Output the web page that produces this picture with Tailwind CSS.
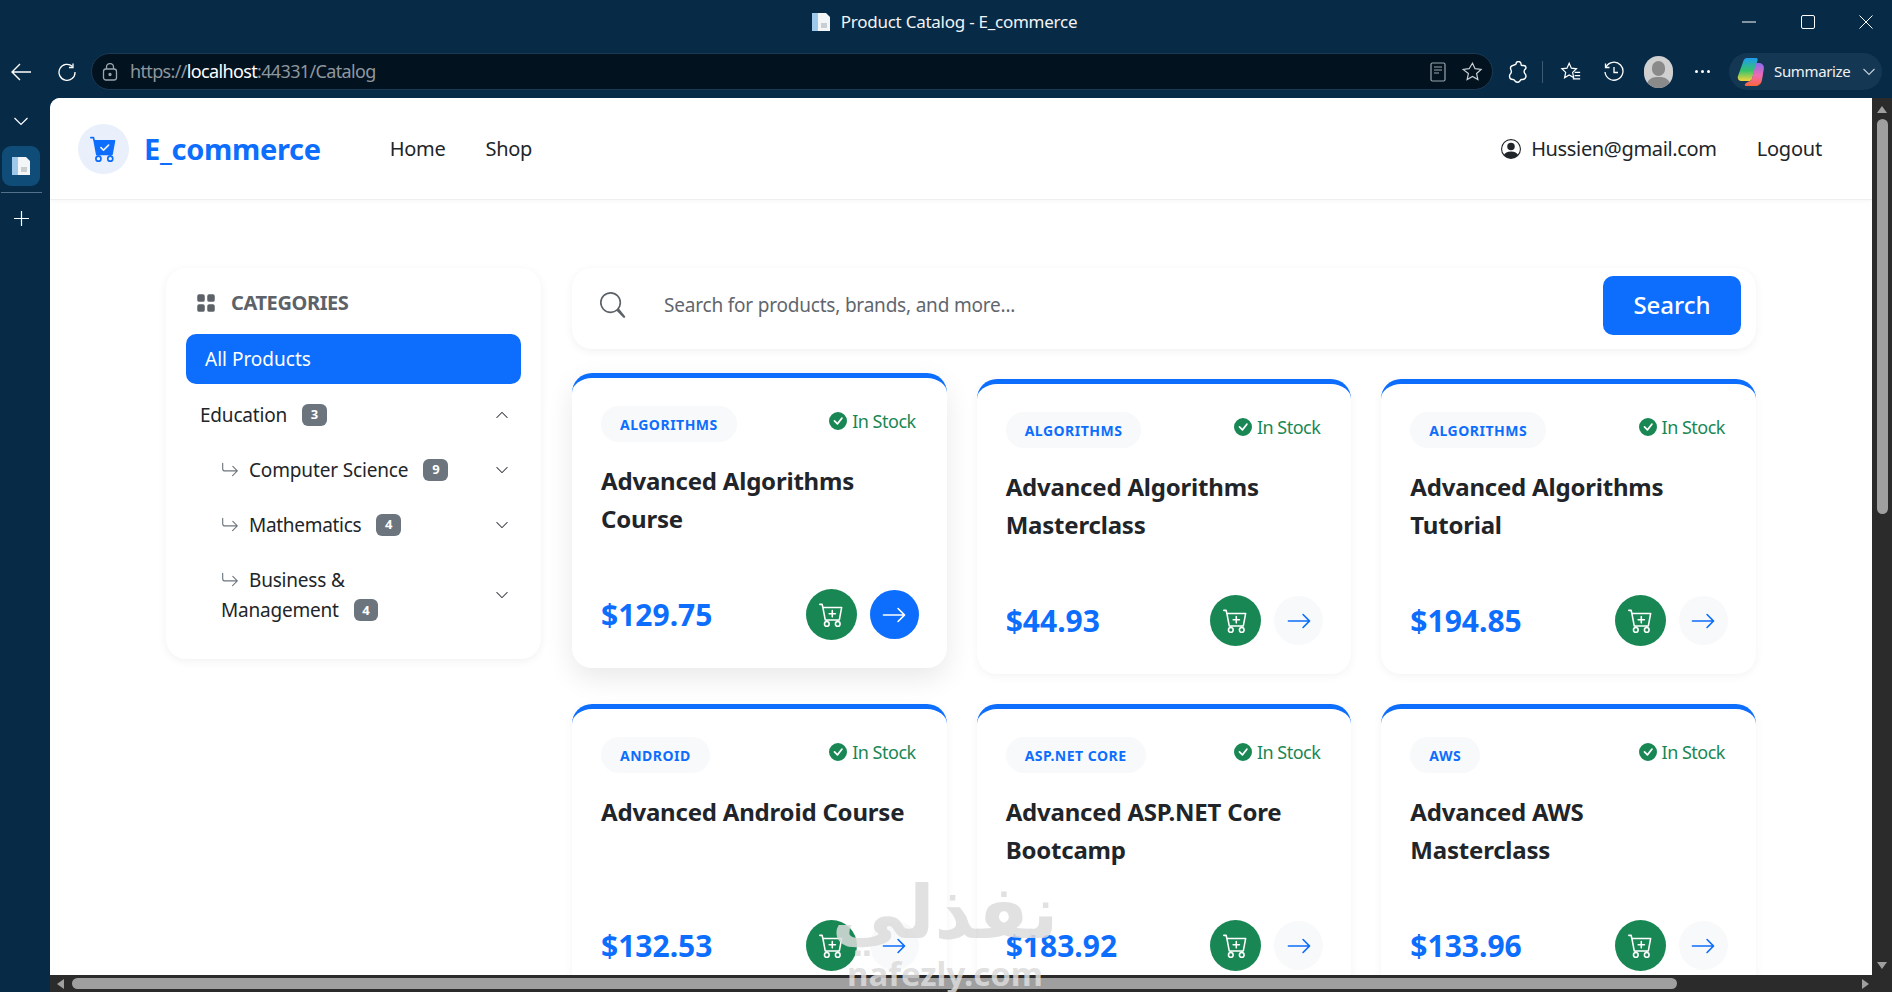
<!DOCTYPE html>
<html lang="en">

<head>
    <meta charset="UTF-8">
    <meta name="viewport" content="width=device-width, initial-scale=1.0">
    <title>Product Catalog - E_commerce</title>
    <script src="https://cdn.jsdelivr.net/npm/@tailwindcss/browser@4"></script>
</head>

<body class="bg-[#072a47] font-['Noto_Sans',sans-serif] text-[#212529]">
    <div class="relative w-[1892px] h-[992px] overflow-hidden flex flex-col bg-[#072a47]">

        <!-- title bar -->
        <div class="relative h-[44px] shrink-0 flex items-center justify-center text-white">
            <div class="flex items-center gap-[10px] -ml-[4px]">
                <svg width="20" height="20" viewBox="0 0 20 20"><rect x="1" y="1" width="6" height="18" fill="#9fc9ea"/><path d="M7 1h8l4 4v14H7z" fill="#f3f5f7"/><path d="M10 11h6v5h-6z" fill="#c9ced3"/></svg>
                <span class="text-[17px] tracking-[-0.25px] text-[#f2f4f6]">Product Catalog - E_commerce</span>
            </div>
            <div class="absolute right-0 top-0 h-full flex items-center text-white">
                <svg class="mr-[45px]" width="14" height="14" viewBox="0 0 14 14"><path d="M0 7h14" stroke="currentColor" stroke-width="1"/></svg>
                <svg class="mr-[44px]" width="14" height="14" viewBox="0 0 14 14"><rect x=".5" y=".5" width="13" height="13" rx="1.5" fill="none" stroke="currentColor"/></svg>
                <svg class="mr-[19px]" width="14" height="14" viewBox="0 0 14 14"><path d="M.5.5l13 13M13.500.5l-13 13" stroke="currentColor" fill="none"/></svg>
            </div>
        </div>

        <!-- toolbar -->
        <div class="h-[54px] shrink-0 flex items-center pt-[1px]">
            <svg class="ml-[11px]" width="20" height="20" viewBox="0 0 20 20" fill="none" stroke="#fff" stroke-width="1.4"><path d="M20 10H1M9 2l-8 8 8 8"/></svg>
            <svg class="ml-[27px]" width="18" height="18" viewBox="0 0 18 18" fill="none" stroke="#fff" stroke-width="1.3"><path d="M14.500 3.500A8 8 0 1 0 17 9"/><path d="M15 .5v4h-4"/></svg>
            <div class="ml-[15px] w-[1402px] h-[37px] rounded-full bg-[#03121f] border border-[#1c3a54] flex items-center pl-[10px] pr-[9px]">
                <svg width="16" height="18" viewBox="0 0 16 18" fill="none" stroke="#9aa5ae" stroke-width="1.300"><rect x="1.500" y="6" width="13" height="11" rx="2.500"/><path d="M4.500 6V4a3.500 3.500 0 0 1 7 0v2"/><circle cx="8" cy="11.500" r="1" fill="#9aa5ae"/></svg>
                <div class="ml-[12px] text-[18px] tracking-[-0.65px] text-[#8d979f]">https://<span class="text-white">localhost</span>:44331/Catalog</div>
                <svg class="ml-auto" width="16" height="20" viewBox="0 0 16 20" fill="none" stroke="#9aa5ae" stroke-width="1.200"><rect x="1" y="1" width="14" height="18" rx="1.500"/><path d="M4 5h8M4 8h8M4 11h5"/></svg>
                <svg class="ml-[16px]" width="21" height="21" viewBox="0 0 24 24" fill="none" stroke="#c9d0d6" stroke-width="1.400"><path d="M12 2.500l2.900 6.300 6.900.8-5.100 4.700 1.400 6.800-6.100-3.500-6.100 3.500 1.400-6.800L1.200 9.600l6.900-.8z"/></svg>
            </div>
            <svg class="ml-[15px]" width="20" height="22" viewBox="0 0 20 22" fill="none" stroke="#fff" stroke-width="1.400"><path d="M8 3a2.500 2.500 0 0 1 5 0c0 1 0 1.500 1 1.500h1.500A2.500 2.500 0 0 1 18 7c0 1-1 1-1.500 2-.5 1-.5 2 0 3s1.500 1.500 1.500 3a3.500 3.500 0 0 1-3.500 3.500h-1c-1 0-1 1-2 2-1 1-3.500 1-4.500-.5-.5-1-1-1.500-2-1.500-2 0-3.500-1.500-3.500-3.500 0-1.500 1-2 1.500-3 .5-1 .5-2 0-3S2 7 3 5.500c1-1.500 4-1 5-2.500z"/></svg>
            <div class="ml-[14px] w-px h-[22px] bg-[#3f5a72]"></div>
            <svg class="ml-[17px]" width="22" height="22" viewBox="0 0 24 24" fill="none" stroke="#fff" stroke-width="1.300"><path d="M10 2.500l2.400 5.300 5.600.7-4.200 3.900 1.100 5.600-4.900-2.800-5 3.200 1.200-6-4.200-3.900 5.600-.7zM16 12.500h6M16 16h6M14 19.500h8"/></svg>
            <svg class="ml-[21px]" width="22" height="22" viewBox="0 0 22 22" fill="none" stroke="#fff" stroke-width="1.300"><path d="M3 6a9 9 0 1 1-1 5"/><path d="M2.500 2.500V6.500h4M11 6v5.500h4"/></svg>
            <div class="ml-[19px] w-[29px] h-[32px] rounded-full bg-[#d0d0d0] overflow-hidden relative">
                <div class="absolute left-[8px] top-[5px] w-[13px] h-[15px] rounded-full bg-[#8a8a8a]"></div>
                <div class="absolute left-[2px] top-[21px] w-[25px] h-[20px] rounded-full bg-[#8a8a8a]"></div>
            </div>
            <div class="ml-[22px] flex gap-[3px]">
                <div class="w-[3px] h-[3px] rounded-full bg-white"></div>
                <div class="w-[3px] h-[3px] rounded-full bg-white"></div>
                <div class="w-[3px] h-[3px] rounded-full bg-white"></div>
            </div>
            <div class="ml-[19px] w-[153px] h-[37px] rounded-full bg-[#143754] flex items-center pl-[8px]">
                <svg width="28" height="30" viewBox="0 0 28 30">
                    <defs>
                        <linearGradient id="copA" x1="0" y1="0" x2="0" y2="1"><stop offset="0" stop-color="#1e9bf0"/><stop offset=".55" stop-color="#36c46b"/><stop offset="1" stop-color="#f6d33c"/></linearGradient>
                        <linearGradient id="copB" x1="0" y1="0" x2="0" y2="1"><stop offset="0" stop-color="#8a6cf0"/><stop offset=".55" stop-color="#f06ab0"/><stop offset="1" stop-color="#f9663a"/></linearGradient>
                    </defs>
                    <path d="M10 1h9c1.500 0 2 1 1.500 2.500L15 22c-.5 1.500-2 2-3.500 2H5c-3 0-5-2-4-5L6 5c.8-2.500 2-4 4-4z" fill="url(#copA)"/>
                    <path d="M19 6h3c3 0 5.500 2.500 4.800 6L25 23c-.7 4-3.500 6-7 6H9c-1.500 0-1.500-1.500-.5-2.500l3-2c2 0 3-1 3.500-3z" fill="url(#copB)"/>
                </svg>
                <span class="ml-[9px] text-[15px] tracking-[-0.35px] text-[#eef2f5]">Summarize</span>
                <svg class="ml-auto mr-[7px]" width="12" height="8" viewBox="0 0 12 8" fill="none" stroke="#c6d0d8" stroke-width="1.100"><path d="M.5 1l5.500 5.500L11.500 1"/></svg>
            </div>
        </div>

        <div class="flex-1 min-h-0 flex">
            <!-- edge vertical tabs -->
            <div class="w-[50px] shrink-0 flex flex-col items-center pr-[8px]">
                <svg class="mt-[19px]" width="14" height="9" viewBox="0 0 14 9" fill="none" stroke="#fff" stroke-width="1.200"><path d="M.5 1l6.500 6.500L13.500 1"/></svg>
                <div class="mt-[20px] w-[38px] h-[40px] rounded-[9px] bg-[#0f4d78] flex items-center justify-center">
                    <svg width="20" height="20" viewBox="0 0 20 20"><rect x="1" y="1" width="6" height="18" fill="#9fc9ea"/><path d="M7 1h8l4 4v14H7z" fill="#f3f5f7"/><path d="M10 11h6v5h-6z" fill="#c9ced3"/></svg>
                </div>
                <div class="mt-[6px] w-[41px] h-px bg-[#54708a] shrink-0"></div>
                <svg class="mt-[18px]" width="15" height="15" viewBox="0 0 15 15" stroke="#fff" stroke-width="1.200"><path d="M7.500 0v15M0 7.500h15"/></svg>
            </div>

            <div class="flex-1 min-w-0 flex flex-col">
                <div class="flex-1 min-h-0 flex">
                    <!-- page -->
                    <div class="flex-1 min-w-0 bg-white rounded-tl-[10px] overflow-hidden">
                        <nav class="h-[102px] bg-white border-b border-[#eeeff1] shadow-[0_1px_4px_rgba(0,0,0,0.04)] flex items-center pl-[28px] pr-[50px]">
                            <div class="w-[51px] h-[50px] rounded-full bg-[#e9f0fb] flex items-center justify-center">
                                <svg width="27" height="27" viewBox="0 0 16 16" fill="#0d6efd"><path d="M.5 1a.5.5 0 0 0 0 1h1.110l.401 1.607 1.498 7.985A.5.5 0 0 0 4 12h1a2 2 0 1 0 0 4 2 2 0 0 0 0-4h7a2 2 0 1 0 0 4 2 2 0 0 0 0-4h1a.5.5 0 0 0 .491-.408l1.500-8A.5.5 0 0 0 14.500 3H2.890l-.405-1.621A.5.5 0 0 0 2 1H.5zM6 14a1 1 0 1 1-2 0 1 1 0 0 1 2 0zm7 0a1 1 0 1 1-2 0 1 1 0 0 1 2 0zm-1.646-7.646-3 3a.5.5 0 0 1-.708 0l-1.500-1.500a.5.5 0 1 1 .708-.708L8 8.293l2.646-2.647a.5.5 0 0 1 .708.708z"/></svg>
                            </div>
                            <div class="ml-[15px] text-[29px] font-bold text-[#0d6efd] tracking-[-0.3px]">E_commerce</div>
                            <div class="ml-[69px] text-[20px] tracking-[-0.3px]">Home</div>
                            <div class="ml-[40px] text-[20px] tracking-[-0.3px]">Shop</div>
                            <svg class="ml-auto" width="20" height="20" viewBox="0 0 16 16" fill="#212529"><path d="M11 6a3 3 0 1 1-6 0 3 3 0 0 1 6 0z"/><path fill-rule="evenodd" d="M0 8a8 8 0 1 1 16 0A8 8 0 0 1 0 8zm8-7a7 7 0 0 0-5.468 11.370C3.242 11.226 4.805 10 8 10s4.757 1.225 5.468 2.370A7 7 0 0 0 8 1z"/></svg>
                            <div class="ml-[10px] text-[20px] tracking-[-0.35px]">Hussien@gmail.com</div>
                            <div class="ml-[40px] text-[20px] tracking-[-0.2px]">Logout</div>
                        </nav>

                        <div class="ml-[116px] w-[1591px] pt-[68px] flex gap-[31px] items-start">
                            <!-- categories -->
                            <aside class="w-[375px] shrink-0 h-[391px] bg-white rounded-[20px] shadow-[0_2px_10px_rgba(0,0,0,0.06)] px-[20px] pt-[20px]">
                                <div class="flex items-center h-[30px] pl-[10px]">
                                    <svg width="20" height="20" viewBox="0 0 16 16" fill="#5c6268"><path d="M1 2.500A1.500 1.500 0 0 1 2.500 1h3A1.500 1.500 0 0 1 7 2.500v3A1.500 1.500 0 0 1 5.500 7h-3A1.500 1.500 0 0 1 1 5.500v-3zm8 0A1.500 1.500 0 0 1 10.500 1h3A1.500 1.500 0 0 1 15 2.500v3A1.500 1.500 0 0 1 13.500 7h-3A1.500 1.500 0 0 1 9 5.500v-3zm-8 8A1.500 1.500 0 0 1 2.500 9h3A1.500 1.500 0 0 1 7 10.500v3A1.500 1.500 0 0 1 5.500 15h-3A1.500 1.500 0 0 1 1 13.500v-3zm8 0a1.500 1.500 0 0 1 1.500-1.500h3a1.500 1.500 0 0 1 1.500 1.500v3a1.500 1.500 0 0 1-1.500 1.500h-3A1.500 1.500 0 0 1 9 13.500v-3z"/></svg>
                                    <div class="ml-[15px] text-[20px] font-bold text-[#5c6268] tracking-[-0.4px]">CATEGORIES</div>
                                </div>
                                <div class="mt-[16px] h-[50px] rounded-[10px] bg-[#0d6efd] text-white text-[19px] flex items-center pl-[19px]">All Products</div>
                                <div class="mt-[8px] h-[46px] flex items-center pl-[14px] pr-[12px]">
                                    <span class="text-[19px] tracking-[-0.2px]">Education</span>
                                    <span class="ml-[15px] w-[25px] h-[22px] rounded-[6px] bg-[#6c757d] text-white text-[13px] font-bold flex items-center justify-center">3</span>
                                    <svg class="ml-auto" width="14" height="14" viewBox="0 0 16 16" fill="#3b4046"><path d="M1.646 11.354a.5.5 0 0 0 .708 0L8 5.707l5.646 5.647a.5.5 0 0 0 .708-.708l-6-6a.5.5 0 0 0-.708 0l-6 6a.5.5 0 0 0 0 .708z"/></svg>
                                </div>
                                <div class="mt-[9px] h-[46px] flex items-center pl-[35px] pr-[12px]">
                                    <svg width="18" height="18" viewBox="0 0 16 16" fill="#6c757d"><path d="M1.500 1.500A.5.5 0 0 0 1 2v4.800a2.500 2.500 0 0 0 2.500 2.500h9.793l-3.347 3.346a.5.5 0 0 0 .708.708l4.200-4.200a.5.5 0 0 0 0-.708l-4-4a.5.5 0 0 0-.708.708L13.293 8.300H3.500A1.500 1.500 0 0 1 2 6.800V2a.5.5 0 0 0-.5-.5z"/></svg>
                                    <span class="ml-[10px] text-[19px] tracking-[-0.15px]">Computer Science</span>
                                    <span class="ml-[15px] w-[25px] h-[22px] rounded-[6px] bg-[#6c757d] text-white text-[13px] font-bold flex items-center justify-center">9</span>
                                    <svg class="ml-auto" width="14" height="14" viewBox="0 0 16 16" fill="#3b4046"><path d="M1.646 4.646a.5.5 0 0 1 .708 0L8 10.293l5.646-5.647a.5.5 0 0 1 .708.708l-6 6a.5.5 0 0 1-.708 0l-6-6a.5.5 0 0 1 0-.708z"/></svg>
                                </div>
                                <div class="mt-[9px] h-[46px] flex items-center pl-[35px] pr-[12px]">
                                    <svg width="18" height="18" viewBox="0 0 16 16" fill="#6c757d"><path d="M1.500 1.500A.5.5 0 0 0 1 2v4.800a2.500 2.500 0 0 0 2.500 2.500h9.793l-3.347 3.346a.5.5 0 0 0 .708.708l4.200-4.200a.5.5 0 0 0 0-.708l-4-4a.5.5 0 0 0-.708.708L13.293 8.300H3.500A1.500 1.500 0 0 1 2 6.800V2a.5.5 0 0 0-.5-.5z"/></svg>
                                    <span class="ml-[10px] text-[19px] tracking-[-0.3px]">Mathematics</span>
                                    <span class="ml-[15px] w-[25px] h-[22px] rounded-[6px] bg-[#6c757d] text-white text-[13px] font-bold flex items-center justify-center">4</span>
                                    <svg class="ml-auto" width="14" height="14" viewBox="0 0 16 16" fill="#3b4046"><path d="M1.646 4.646a.5.5 0 0 1 .708 0L8 10.293l5.646-5.647a.5.5 0 0 1 .708.708l-6 6a.5.5 0 0 1-.708 0l-6-6a.5.5 0 0 1 0-.708z"/></svg>
                                </div>
                                <div class="mt-[17px] flex items-center pl-[35px] pr-[12px]">
                                    <div class="text-[19px] tracking-[-0.2px] leading-[30px]">
                                        <div class="flex items-center">
                                            <svg width="18" height="18" viewBox="0 0 16 16" fill="#6c757d"><path d="M1.500 1.500A.5.5 0 0 0 1 2v4.800a2.500 2.500 0 0 0 2.500 2.500h9.793l-3.347 3.346a.5.5 0 0 0 .708.708l4.200-4.200a.5.5 0 0 0 0-.708l-4-4a.5.5 0 0 0-.708.708L13.293 8.300H3.500A1.500 1.500 0 0 1 2 6.800V2a.5.5 0 0 0-.5-.5z"/></svg>
                                            <span class="ml-[10px]">Business &amp;</span>
                                        </div>
                                        <div class="flex items-center">
                                            <span>Management</span>
                                            <span class="ml-[15px] w-[24px] h-[22px] rounded-[6px] bg-[#6c757d] text-white text-[13px] font-bold flex items-center justify-center">4</span>
                                        </div>
                                    </div>
                                    <svg class="ml-auto" width="14" height="14" viewBox="0 0 16 16" fill="#3b4046"><path d="M1.646 4.646a.5.5 0 0 1 .708 0L8 10.293l5.646-5.647a.5.5 0 0 1 .708.708l-6 6a.5.5 0 0 1-.708 0l-6-6a.5.5 0 0 1 0-.708z"/></svg>
                                </div>
                            </aside>

                            <div class="w-[1184px] shrink-0">
                                <!-- search -->
                                <div class="h-[81px] bg-white rounded-[20px] shadow-[0_2px_10px_rgba(0,0,0,0.06)] flex items-center pl-[28px] pr-[15px] pb-[7px]">
                                    <svg width="26" height="26" viewBox="0 0 16 16" fill="#5c6268"><path d="M11.742 10.344a6.500 6.500 0 1 0-1.397 1.398l3.948 3.965a.7.7 0 0 0 1-1zM12 6.500a5.500 5.500 0 1 1-11 0 5.500 5.500 0 0 1 11 0z"/></svg>
                                    <div class="ml-[38px] text-[19px] tracking-[-0.2px] text-[#5f666d]">Search for products, brands, and more...</div>
                                    <div class="ml-auto w-[138px] h-[59px] rounded-[10px] bg-[#0d6efd] text-white text-[24px] font-medium flex items-center justify-center">Search</div>
                                </div>

                                <div class="mt-[30px] grid grid-cols-3 gap-x-[30px] gap-y-[30px]">
                                    <!-- hovered card -->
                                    <div class="-translate-y-[6px] h-[295px] bg-white rounded-[20px] border-t-[5px] border-[#0d6efd] shadow-[0_10px_28px_rgba(0,0,0,0.09)] pl-[29px] pr-[28px] pt-[28px] pb-[28px] flex flex-col">
                                        <div class="flex items-start justify-between pr-[3px]">
                                            <div class="h-[36px] px-[19px] rounded-full bg-[#f8f9fa] text-[#0d6efd] text-[14px] font-bold tracking-[0.5px] flex items-center">ALGORITHMS</div>
                                            <div class="flex items-center text-[#198754] text-[18px] tracking-[-0.5px] mt-[1px] leading-[28px]">
                                                <svg class="mr-[5px]" width="18" height="18" viewBox="0 0 16 16" fill="#198754"><path d="M16 8A8 8 0 1 1 0 8a8 8 0 0 1 16 0zm-3.970-3.030a.75.75 0 0 0-1.080.022L7.477 9.417 5.384 7.323a.75.75 0 0 0-1.060 1.060L6.970 11.030a.75.75 0 0 0 1.079-.020l3.992-4.990a.75.75 0 0 0-.010-1.050z"/></svg>
                                                In Stock
                                            </div>
                                        </div>
                                        <div class="mt-[20px] text-[24px] leading-[38px] font-bold tracking-[-0.2px]">Advanced Algorithms<br>Course</div>
                                        <div class="mt-auto flex items-center">
                                            <div class="text-[30px] font-bold text-[#0d6efd]">$129.75</div>
                                            <div class="ml-auto w-[51px] h-[51px] rounded-full bg-[#198754] flex items-center justify-center">
                                                <svg width="25" height="25" viewBox="0 0 16 16" fill="#fff"><path d="M9 5.500a.5.5 0 0 0-1 0V7H6.500a.5.5 0 0 0 0 1H8v1.500a.5.5 0 0 0 1 0V8h1.500a.5.5 0 0 0 0-1H9V5.500z"/><path d="M.5 1a.5.5 0 0 0 0 1h1.110l.401 1.607 1.498 7.985A.5.5 0 0 0 4 12h1a2 2 0 1 0 0 4 2 2 0 0 0 0-4h7a2 2 0 1 0 0 4 2 2 0 0 0 0-4h1a.5.5 0 0 0 .491-.408l1.500-8A.5.5 0 0 0 14.500 3H2.890l-.405-1.621A.5.5 0 0 0 2 1H.5zm3.915 10L3.102 4h10.796l-1.313 7h-8.170zM6 14a1 1 0 1 1-2 0 1 1 0 0 1 2 0zm7 0a1 1 0 1 1-2 0 1 1 0 0 1 2 0z"/></svg>
                                            </div>
                                            <div class="ml-[13px] w-[49px] h-[49px] rounded-full bg-[#0d6efd] flex items-center justify-center">
                                                <svg width="26" height="26" viewBox="0 0 16 16" fill="#fff"><path d="M1 8a.5.5 0 0 1 .5-.5h11.793l-3.147-3.146a.5.5 0 0 1 .708-.708l4 4a.5.5 0 0 1 0 .708l-4 4a.5.5 0 0 1-.708-.708L13.293 8.500H1.500A.5.5 0 0 1 1 8z"/></svg>
                                            </div>
                                        </div>
                                    </div>

                                    <div class="h-[295px] bg-white rounded-[20px] border-t-[5px] border-[#0d6efd] shadow-[0_2px_10px_rgba(0,0,0,0.05)] pl-[29px] pr-[28px] pt-[28px] pb-[28px] flex flex-col">
                                        <div class="flex items-start justify-between pr-[3px]">
                                            <div class="h-[36px] px-[19px] rounded-full bg-[#f8f9fa] text-[#0d6efd] text-[14px] font-bold tracking-[0.5px] flex items-center">ALGORITHMS</div>
                                            <div class="flex items-center text-[#198754] text-[18px] tracking-[-0.5px] mt-[1px] leading-[28px]">
                                                <svg class="mr-[5px]" width="18" height="18" viewBox="0 0 16 16" fill="#198754"><path d="M16 8A8 8 0 1 1 0 8a8 8 0 0 1 16 0zm-3.970-3.030a.75.75 0 0 0-1.080.022L7.477 9.417 5.384 7.323a.75.75 0 0 0-1.060 1.060L6.970 11.030a.75.75 0 0 0 1.079-.020l3.992-4.990a.75.75 0 0 0-.010-1.050z"/></svg>
                                                In Stock
                                            </div>
                                        </div>
                                        <div class="mt-[20px] text-[24px] leading-[38px] font-bold tracking-[-0.2px]">Advanced Algorithms<br>Masterclass</div>
                                        <div class="mt-auto flex items-center">
                                            <div class="text-[30px] font-bold text-[#0d6efd]">$44.93</div>
                                            <div class="ml-auto w-[51px] h-[51px] rounded-full bg-[#198754] flex items-center justify-center">
                                                <svg width="25" height="25" viewBox="0 0 16 16" fill="#fff"><path d="M9 5.500a.5.5 0 0 0-1 0V7H6.500a.5.5 0 0 0 0 1H8v1.500a.5.5 0 0 0 1 0V8h1.500a.5.5 0 0 0 0-1H9V5.500z"/><path d="M.5 1a.5.5 0 0 0 0 1h1.110l.401 1.607 1.498 7.985A.5.5 0 0 0 4 12h1a2 2 0 1 0 0 4 2 2 0 0 0 0-4h7a2 2 0 1 0 0 4 2 2 0 0 0 0-4h1a.5.5 0 0 0 .491-.408l1.500-8A.5.5 0 0 0 14.500 3H2.890l-.405-1.621A.5.5 0 0 0 2 1H.5zm3.915 10L3.102 4h10.796l-1.313 7h-8.170zM6 14a1 1 0 1 1-2 0 1 1 0 0 1 2 0zm7 0a1 1 0 1 1-2 0 1 1 0 0 1 2 0z"/></svg>
                                            </div>
                                            <div class="ml-[13px] w-[49px] h-[49px] rounded-full bg-[#f8f9fa] flex items-center justify-center">
                                                <svg width="26" height="26" viewBox="0 0 16 16" fill="#0d6efd"><path d="M1 8a.5.5 0 0 1 .5-.5h11.793l-3.147-3.146a.5.5 0 0 1 .708-.708l4 4a.5.5 0 0 1 0 .708l-4 4a.5.5 0 0 1-.708-.708L13.293 8.500H1.500A.5.5 0 0 1 1 8z"/></svg>
                                            </div>
                                        </div>
                                    </div>

                                    <div class="h-[295px] bg-white rounded-[20px] border-t-[5px] border-[#0d6efd] shadow-[0_2px_10px_rgba(0,0,0,0.05)] pl-[29px] pr-[28px] pt-[28px] pb-[28px] flex flex-col">
                                        <div class="flex items-start justify-between pr-[3px]">
                                            <div class="h-[36px] px-[19px] rounded-full bg-[#f8f9fa] text-[#0d6efd] text-[14px] font-bold tracking-[0.5px] flex items-center">ALGORITHMS</div>
                                            <div class="flex items-center text-[#198754] text-[18px] tracking-[-0.5px] mt-[1px] leading-[28px]">
                                                <svg class="mr-[5px]" width="18" height="18" viewBox="0 0 16 16" fill="#198754"><path d="M16 8A8 8 0 1 1 0 8a8 8 0 0 1 16 0zm-3.970-3.030a.75.75 0 0 0-1.080.022L7.477 9.417 5.384 7.323a.75.75 0 0 0-1.060 1.060L6.970 11.030a.75.75 0 0 0 1.079-.020l3.992-4.990a.75.75 0 0 0-.010-1.050z"/></svg>
                                                In Stock
                                            </div>
                                        </div>
                                        <div class="mt-[20px] text-[24px] leading-[38px] font-bold tracking-[-0.2px]">Advanced Algorithms<br>Tutorial</div>
                                        <div class="mt-auto flex items-center">
                                            <div class="text-[30px] font-bold text-[#0d6efd]">$194.85</div>
                                            <div class="ml-auto w-[51px] h-[51px] rounded-full bg-[#198754] flex items-center justify-center">
                                                <svg width="25" height="25" viewBox="0 0 16 16" fill="#fff"><path d="M9 5.500a.5.5 0 0 0-1 0V7H6.500a.5.5 0 0 0 0 1H8v1.500a.5.5 0 0 0 1 0V8h1.500a.5.5 0 0 0 0-1H9V5.500z"/><path d="M.5 1a.5.5 0 0 0 0 1h1.110l.401 1.607 1.498 7.985A.5.5 0 0 0 4 12h1a2 2 0 1 0 0 4 2 2 0 0 0 0-4h7a2 2 0 1 0 0 4 2 2 0 0 0 0-4h1a.5.5 0 0 0 .491-.408l1.500-8A.5.5 0 0 0 14.500 3H2.890l-.405-1.621A.5.5 0 0 0 2 1H.5zm3.915 10L3.102 4h10.796l-1.313 7h-8.170zM6 14a1 1 0 1 1-2 0 1 1 0 0 1 2 0zm7 0a1 1 0 1 1-2 0 1 1 0 0 1 2 0z"/></svg>
                                            </div>
                                            <div class="ml-[13px] w-[49px] h-[49px] rounded-full bg-[#f8f9fa] flex items-center justify-center">
                                                <svg width="26" height="26" viewBox="0 0 16 16" fill="#0d6efd"><path d="M1 8a.5.5 0 0 1 .5-.5h11.793l-3.147-3.146a.5.5 0 0 1 .708-.708l4 4a.5.5 0 0 1 0 .708l-4 4a.5.5 0 0 1-.708-.708L13.293 8.500H1.500A.5.5 0 0 1 1 8z"/></svg>
                                            </div>
                                        </div>
                                    </div>

                                    <div class="h-[295px] bg-white rounded-[20px] border-t-[5px] border-[#0d6efd] shadow-[0_2px_10px_rgba(0,0,0,0.05)] pl-[29px] pr-[28px] pt-[28px] pb-[28px] flex flex-col">
                                        <div class="flex items-start justify-between pr-[3px]">
                                            <div class="h-[36px] px-[19px] rounded-full bg-[#f8f9fa] text-[#0d6efd] text-[14px] font-bold tracking-[0.5px] flex items-center">ANDROID</div>
                                            <div class="flex items-center text-[#198754] text-[18px] tracking-[-0.5px] mt-[1px] leading-[28px]">
                                                <svg class="mr-[5px]" width="18" height="18" viewBox="0 0 16 16" fill="#198754"><path d="M16 8A8 8 0 1 1 0 8a8 8 0 0 1 16 0zm-3.970-3.030a.75.75 0 0 0-1.080.022L7.477 9.417 5.384 7.323a.75.75 0 0 0-1.060 1.060L6.970 11.030a.75.75 0 0 0 1.079-.020l3.992-4.990a.75.75 0 0 0-.010-1.050z"/></svg>
                                                In Stock
                                            </div>
                                        </div>
                                        <div class="mt-[20px] text-[24px] leading-[38px] font-bold tracking-[-0.2px]">Advanced Android Course</div>
                                        <div class="mt-auto flex items-center">
                                            <div class="text-[30px] font-bold text-[#0d6efd]">$132.53</div>
                                            <div class="ml-auto w-[51px] h-[51px] rounded-full bg-[#198754] flex items-center justify-center">
                                                <svg width="25" height="25" viewBox="0 0 16 16" fill="#fff"><path d="M9 5.500a.5.5 0 0 0-1 0V7H6.500a.5.5 0 0 0 0 1H8v1.500a.5.5 0 0 0 1 0V8h1.500a.5.5 0 0 0 0-1H9V5.500z"/><path d="M.5 1a.5.5 0 0 0 0 1h1.110l.401 1.607 1.498 7.985A.5.5 0 0 0 4 12h1a2 2 0 1 0 0 4 2 2 0 0 0 0-4h7a2 2 0 1 0 0 4 2 2 0 0 0 0-4h1a.5.5 0 0 0 .491-.408l1.500-8A.5.5 0 0 0 14.500 3H2.890l-.405-1.621A.5.5 0 0 0 2 1H.5zm3.915 10L3.102 4h10.796l-1.313 7h-8.170zM6 14a1 1 0 1 1-2 0 1 1 0 0 1 2 0zm7 0a1 1 0 1 1-2 0 1 1 0 0 1 2 0z"/></svg>
                                            </div>
                                            <div class="ml-[13px] w-[49px] h-[49px] rounded-full bg-[#f8f9fa] flex items-center justify-center">
                                                <svg width="26" height="26" viewBox="0 0 16 16" fill="#0d6efd"><path d="M1 8a.5.5 0 0 1 .5-.5h11.793l-3.147-3.146a.5.5 0 0 1 .708-.708l4 4a.5.5 0 0 1 0 .708l-4 4a.5.5 0 0 1-.708-.708L13.293 8.500H1.500A.5.5 0 0 1 1 8z"/></svg>
                                            </div>
                                        </div>
                                    </div>

                                    <div class="h-[295px] bg-white rounded-[20px] border-t-[5px] border-[#0d6efd] shadow-[0_2px_10px_rgba(0,0,0,0.05)] pl-[29px] pr-[28px] pt-[28px] pb-[28px] flex flex-col">
                                        <div class="flex items-start justify-between pr-[3px]">
                                            <div class="h-[36px] px-[19px] rounded-full bg-[#f8f9fa] text-[#0d6efd] text-[14px] font-bold tracking-[0.5px] flex items-center">ASP.NET CORE</div>
                                            <div class="flex items-center text-[#198754] text-[18px] tracking-[-0.5px] mt-[1px] leading-[28px]">
                                                <svg class="mr-[5px]" width="18" height="18" viewBox="0 0 16 16" fill="#198754"><path d="M16 8A8 8 0 1 1 0 8a8 8 0 0 1 16 0zm-3.970-3.030a.75.75 0 0 0-1.080.022L7.477 9.417 5.384 7.323a.75.75 0 0 0-1.060 1.060L6.970 11.030a.75.75 0 0 0 1.079-.020l3.992-4.990a.75.75 0 0 0-.010-1.050z"/></svg>
                                                In Stock
                                            </div>
                                        </div>
                                        <div class="mt-[20px] text-[24px] leading-[38px] font-bold tracking-[-0.2px]">Advanced ASP.NET Core<br>Bootcamp</div>
                                        <div class="mt-auto flex items-center">
                                            <div class="text-[30px] font-bold text-[#0d6efd]">$183.92</div>
                                            <div class="ml-auto w-[51px] h-[51px] rounded-full bg-[#198754] flex items-center justify-center">
                                                <svg width="25" height="25" viewBox="0 0 16 16" fill="#fff"><path d="M9 5.500a.5.5 0 0 0-1 0V7H6.500a.5.5 0 0 0 0 1H8v1.500a.5.5 0 0 0 1 0V8h1.500a.5.5 0 0 0 0-1H9V5.500z"/><path d="M.5 1a.5.5 0 0 0 0 1h1.110l.401 1.607 1.498 7.985A.5.5 0 0 0 4 12h1a2 2 0 1 0 0 4 2 2 0 0 0 0-4h7a2 2 0 1 0 0 4 2 2 0 0 0 0-4h1a.5.5 0 0 0 .491-.408l1.500-8A.5.5 0 0 0 14.500 3H2.890l-.405-1.621A.5.5 0 0 0 2 1H.5zm3.915 10L3.102 4h10.796l-1.313 7h-8.170zM6 14a1 1 0 1 1-2 0 1 1 0 0 1 2 0zm7 0a1 1 0 1 1-2 0 1 1 0 0 1 2 0z"/></svg>
                                            </div>
                                            <div class="ml-[13px] w-[49px] h-[49px] rounded-full bg-[#f8f9fa] flex items-center justify-center">
                                                <svg width="26" height="26" viewBox="0 0 16 16" fill="#0d6efd"><path d="M1 8a.5.5 0 0 1 .5-.5h11.793l-3.147-3.146a.5.5 0 0 1 .708-.708l4 4a.5.5 0 0 1 0 .708l-4 4a.5.5 0 0 1-.708-.708L13.293 8.500H1.500A.5.5 0 0 1 1 8z"/></svg>
                                            </div>
                                        </div>
                                    </div>

                                    <div class="h-[295px] bg-white rounded-[20px] border-t-[5px] border-[#0d6efd] shadow-[0_2px_10px_rgba(0,0,0,0.05)] pl-[29px] pr-[28px] pt-[28px] pb-[28px] flex flex-col">
                                        <div class="flex items-start justify-between pr-[3px]">
                                            <div class="h-[36px] px-[19px] rounded-full bg-[#f8f9fa] text-[#0d6efd] text-[14px] font-bold tracking-[0.5px] flex items-center">AWS</div>
                                            <div class="flex items-center text-[#198754] text-[18px] tracking-[-0.5px] mt-[1px] leading-[28px]">
                                                <svg class="mr-[5px]" width="18" height="18" viewBox="0 0 16 16" fill="#198754"><path d="M16 8A8 8 0 1 1 0 8a8 8 0 0 1 16 0zm-3.970-3.030a.75.75 0 0 0-1.080.022L7.477 9.417 5.384 7.323a.75.75 0 0 0-1.060 1.060L6.970 11.030a.75.75 0 0 0 1.079-.020l3.992-4.990a.75.75 0 0 0-.010-1.050z"/></svg>
                                                In Stock
                                            </div>
                                        </div>
                                        <div class="mt-[20px] text-[24px] leading-[38px] font-bold tracking-[-0.2px]">Advanced AWS<br>Masterclass</div>
                                        <div class="mt-auto flex items-center">
                                            <div class="text-[30px] font-bold text-[#0d6efd]">$133.96</div>
                                            <div class="ml-auto w-[51px] h-[51px] rounded-full bg-[#198754] flex items-center justify-center">
                                                <svg width="25" height="25" viewBox="0 0 16 16" fill="#fff"><path d="M9 5.500a.5.5 0 0 0-1 0V7H6.500a.5.5 0 0 0 0 1H8v1.500a.5.5 0 0 0 1 0V8h1.500a.5.5 0 0 0 0-1H9V5.500z"/><path d="M.5 1a.5.5 0 0 0 0 1h1.110l.401 1.607 1.498 7.985A.5.5 0 0 0 4 12h1a2 2 0 1 0 0 4 2 2 0 0 0 0-4h7a2 2 0 1 0 0 4 2 2 0 0 0 0-4h1a.5.5 0 0 0 .491-.408l1.500-8A.5.5 0 0 0 14.500 3H2.890l-.405-1.621A.5.5 0 0 0 2 1H.5zm3.915 10L3.102 4h10.796l-1.313 7h-8.170zM6 14a1 1 0 1 1-2 0 1 1 0 0 1 2 0zm7 0a1 1 0 1 1-2 0 1 1 0 0 1 2 0z"/></svg>
                                            </div>
                                            <div class="ml-[13px] w-[49px] h-[49px] rounded-full bg-[#f8f9fa] flex items-center justify-center">
                                                <svg width="26" height="26" viewBox="0 0 16 16" fill="#0d6efd"><path d="M1 8a.5.5 0 0 1 .5-.5h11.793l-3.147-3.146a.5.5 0 0 1 .708-.708l4 4a.5.5 0 0 1 0 .708l-4 4a.5.5 0 0 1-.708-.708L13.293 8.500H1.500A.5.5 0 0 1 1 8z"/></svg>
                                            </div>
                                        </div>
                                    </div>
                                </div>
                            </div>
                        </div>
                    </div>

                    <!-- vertical scrollbar -->
                    <div class="w-[20px] shrink-0 bg-[#2b2b2b] flex flex-col items-center">
                        <div class="mt-[8px] w-0 h-0 border-x-[5px] border-x-transparent border-b-[7px] border-b-[#9f9f9f]"></div>
                        <div class="mt-[6px] w-[11px] h-[395px] rounded-full bg-[#9f9f9f]"></div>
                        <div class="mt-auto mb-[6px] w-0 h-0 border-x-[5px] border-x-transparent border-t-[7px] border-t-[#9f9f9f]"></div>
                    </div>
                </div>

                <!-- horizontal scrollbar -->
                <div class="h-[17px] shrink-0 bg-[#2b2b2b] flex items-center">
                    <div class="ml-[7px] w-0 h-0 border-y-[5px] border-y-transparent border-r-[7px] border-r-[#9f9f9f]"></div>
                    <div class="ml-[8px] w-[1605px] h-[11px] rounded-full bg-[#9f9f9f]"></div>
                    <div class="ml-auto mr-[23px] w-0 h-0 border-y-[5px] border-y-transparent border-l-[7px] border-l-[#9f9f9f]"></div>
                </div>
            </div>
        </div>

        <!-- watermark -->
        <div class="absolute left-[830px] top-[868px] w-[230px] pointer-events-none flex flex-col items-center text-[#dcdcdc]/85 font-['DejaVu_Sans',sans-serif] font-bold">
            <div class="text-[74px] leading-[88px]" dir="rtl" lang="ar">نفذلي</div>
            <div class="text-[33px] leading-[36px] font-['Noto_Sans',sans-serif]">nafezly.com</div>
        </div>
    </div>
</body>

</html>
